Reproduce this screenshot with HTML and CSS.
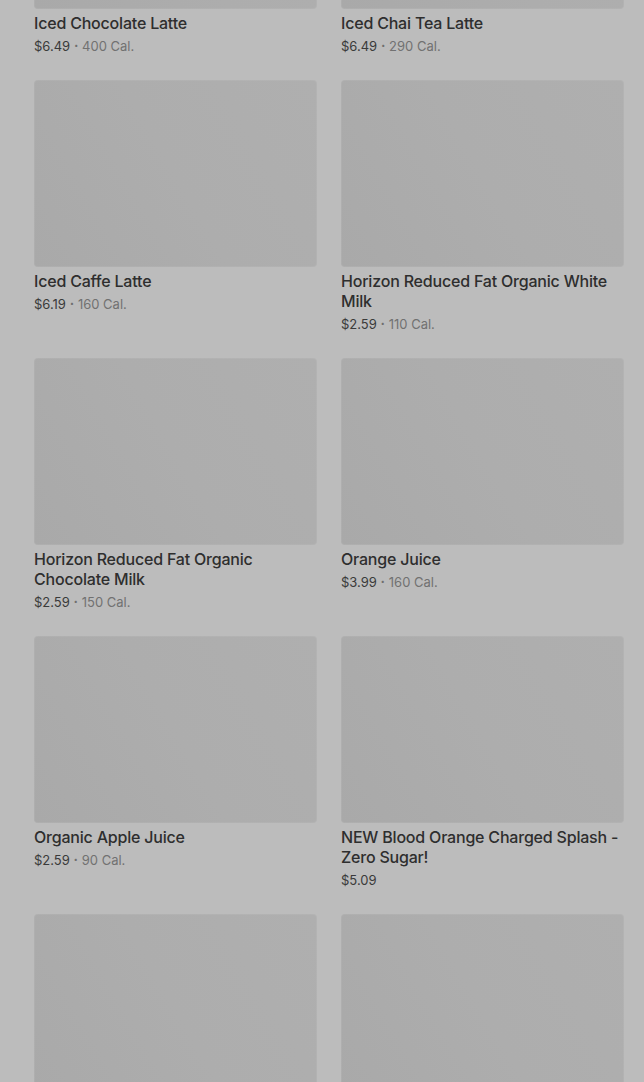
FILE: index.html
```html
<!DOCTYPE html>
<html lang="en">
<head>
    <meta charset="UTF-8">
    <meta name="viewport" content="width=device-width, initial-scale=1.0">
    <title>Cold Drinks</title>
    <link rel="stylesheet" href="styles.css">
</head>
<body>
    <div class="menu">
        <div class="grid">
            <div class="item">
                <div class="thumb"></div>
                <div class="name">Iced Chocolate Latte</div>
                <div class="meta"><span class="price">$6.49</span><span class="dot">•</span><span class="cal">400 Cal.</span></div>
            </div>
            <div class="item">
                <div class="thumb"></div>
                <div class="name">Iced Chai Tea Latte</div>
                <div class="meta"><span class="price">$6.49</span><span class="dot">•</span><span class="cal">290 Cal.</span></div>
            </div>
            <div class="item">
                <div class="thumb"></div>
                <div class="name">Iced Caffe Latte</div>
                <div class="meta"><span class="price">$6.19</span><span class="dot">•</span><span class="cal">160 Cal.</span></div>
            </div>
            <div class="item">
                <div class="thumb"></div>
                <div class="name">Horizon Reduced Fat Organic White Milk</div>
                <div class="meta"><span class="price">$2.59</span><span class="dot">•</span><span class="cal">110 Cal.</span></div>
            </div>
            <div class="item">
                <div class="thumb"></div>
                <div class="name">Horizon Reduced Fat Organic Chocolate Milk</div>
                <div class="meta"><span class="price">$2.59</span><span class="dot">•</span><span class="cal">150 Cal.</span></div>
            </div>
            <div class="item">
                <div class="thumb"></div>
                <div class="name">Orange Juice</div>
                <div class="meta"><span class="price">$3.99</span><span class="dot">•</span><span class="cal">160 Cal.</span></div>
            </div>
            <div class="item">
                <div class="thumb"></div>
                <div class="name">Organic Apple Juice</div>
                <div class="meta"><span class="price">$2.59</span><span class="dot">•</span><span class="cal">90 Cal.</span></div>
            </div>
            <div class="item">
                <div class="thumb"></div>
                <div class="name">NEW Blood Orange Charged Splash - Zero Sugar!</div>
                <div class="meta"><span class="price">$5.09</span></div>
            </div>
            <div class="item">
                <div class="thumb"></div>
            </div>
            <div class="item">
                <div class="thumb"></div>
            </div>
        </div>
    </div>
</body>
</html>
```

FILE: styles.css
```css
body, html {
    margin: 0;
    padding: 0;
    background: #bcbcbc; /* page under the dimmed overlay */
    font-family: 'Inter', 'Roboto', sans-serif;
    overflow: hidden;
}

.menu {
    height: 1082px;
    overflow: hidden;
    padding: 0 20px 0 34px;
}

.grid {
    display: grid;
    grid-template-columns: 283px 283px;
    column-gap: 24px;
    row-gap: 24px;
    margin-top: -178px; /* list is scrolled */
}

.item {
    display: flex;
    flex-direction: column;
}

.thumb {
    height: 187px;
    border-radius: 4px;
    background: linear-gradient(60deg, #a9a9a9, #adadad 50%, #afafaf);
    box-shadow: inset 0 0 0 1px rgba(255, 255, 255, 0.06);
}

.name {
    margin-top: 4px;
    font-size: 16px;
    line-height: 20px;
    font-weight: 500;
    letter-spacing: -0.2px;
    color: #2e2e2e;
}

.meta {
    display: flex;
    align-items: center;
    height: 20px;
    margin-top: 3px;
    font-size: 13px;
    line-height: 20px;
}

.price {
    color: #3a3a3a;
}

.dot {
    font-size: 7px;
    margin: 0 4px;
    color: #6e6e6e;
}

.cal {
    color: #717171;
}
```
